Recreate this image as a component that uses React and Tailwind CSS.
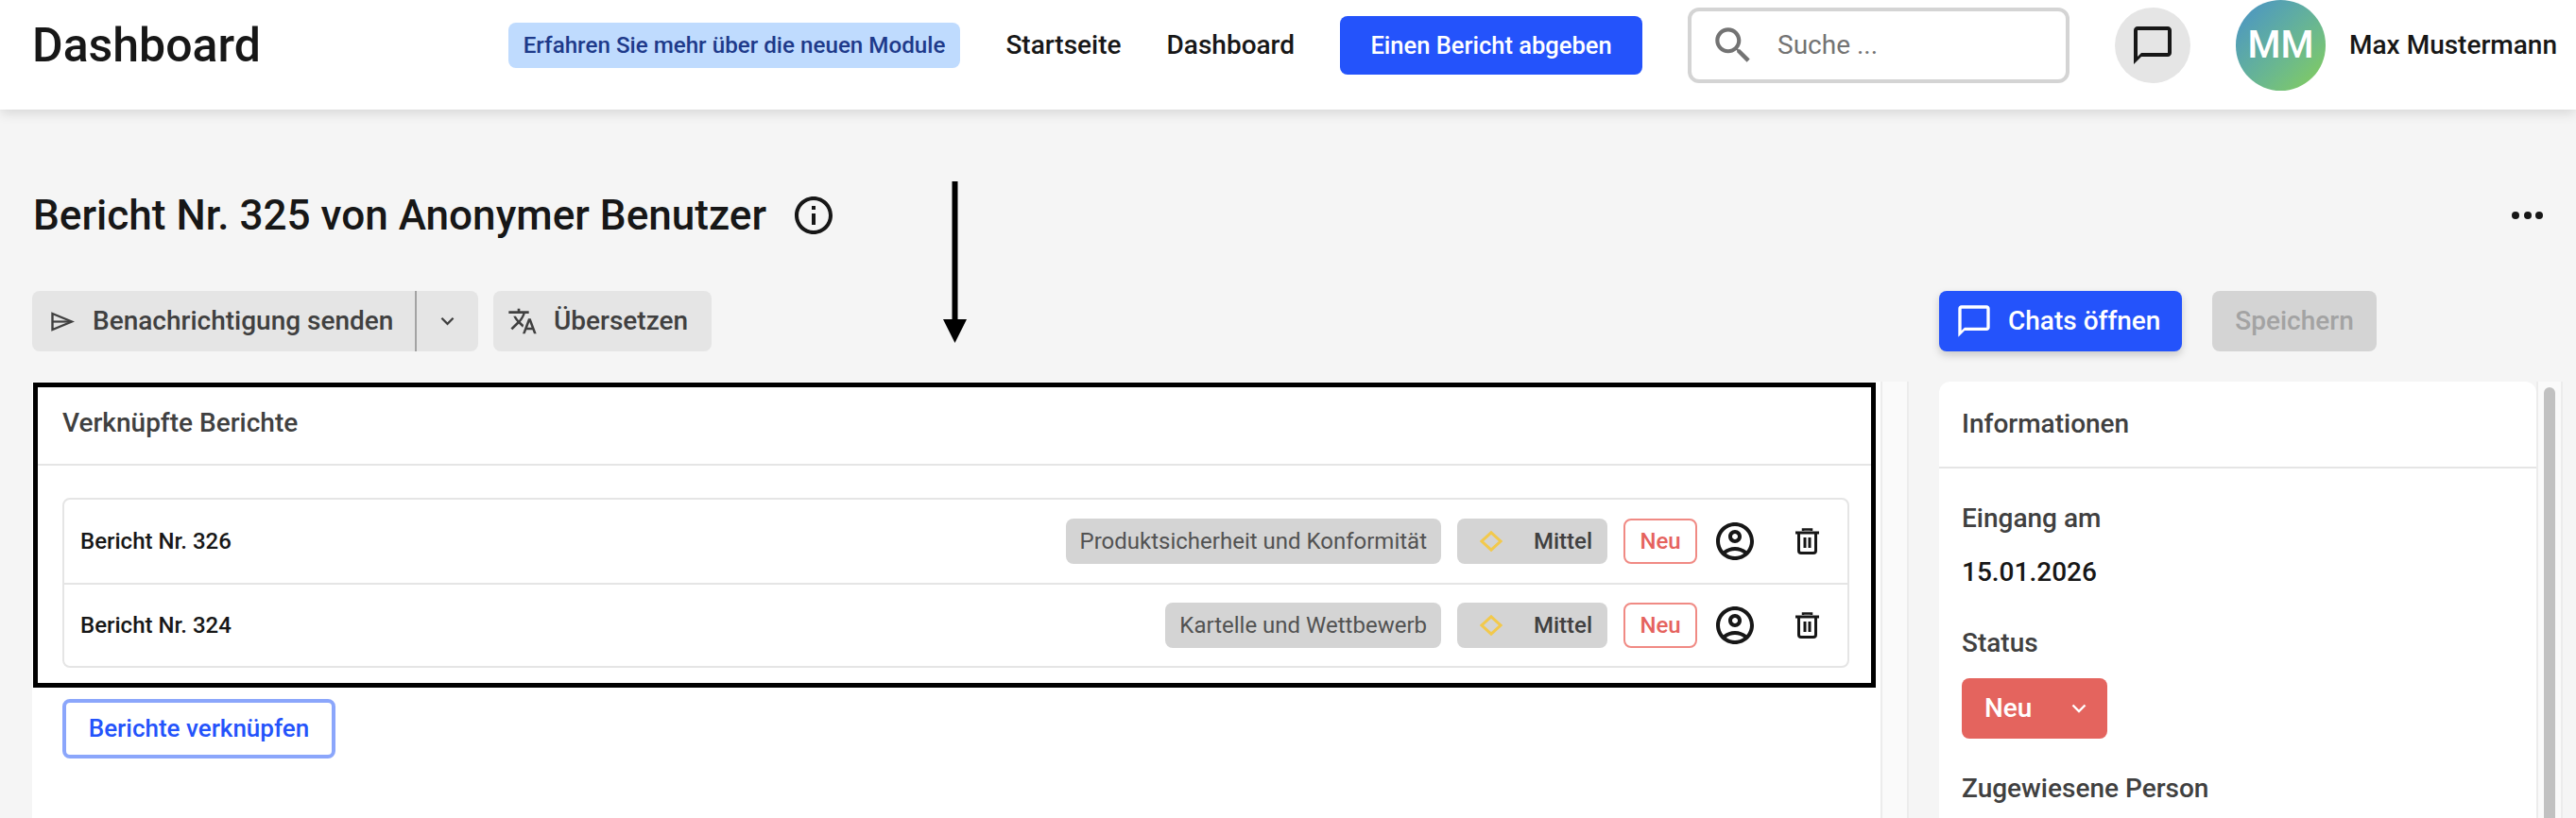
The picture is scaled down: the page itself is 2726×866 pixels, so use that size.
import React from 'react';

const Icon = ({ d, className }) => (
  <svg viewBox="0 0 24 24" fill="currentColor" className={className}>
    <path d={d} />
  </svg>
);

const paths = {
  search: 'M15.5 14h-.79l-.28-.27C15.41 12.59 16 11.11 16 9.5 16 5.91 13.09 3 9.5 3S3 5.91 3 9.5 5.91 16 9.5 16c1.61 0 3.09-.59 4.23-1.57l.27.28v.79l5 4.99L20.49 19l-4.99-5zm-6 0C7.01 14 5 11.99 5 9.5S7.01 5 9.5 5 14 7.01 14 9.5 11.99 14 9.5 14z',
  chat: 'M20 2H4c-1.1 0-2 .9-2 2v18l4-4h14c1.1 0 2-.9 2-2V4c0-1.1-.9-2-2-2zm0 14H6l-2 2V4h16v12z',
  info: 'M11 7h2v2h-2zm0 4h2v6h-2zm1-9C6.48 2 2 6.48 2 12s4.48 10 10 10 10-4.48 10-10S17.52 2 12 2zm0 18c-4.41 0-8-3.59-8-8s3.59-8 8-8 8 3.59 8 8-3.59 8-8 8z',
  translate: 'M12.87 15.07l-2.54-2.51.03-.03c1.74-1.94 2.98-4.17 3.71-6.53H17V4h-7V2H8v2H1v1.99h11.17C11.5 7.92 10.44 9.75 9 11.35 8.07 10.32 7.3 9.19 6.69 8h-2c.73 1.63 1.73 3.17 2.98 4.56l-5.09 5.02L4 19l5-5 3.11 3.11.76-2.04zM18.5 10h-2L12 22h2l1.12-3h4.75L21 22h2l-4.5-12zm-2.62 7l1.62-4.33L19.12 17h-3.24z',
  user: 'M12 2C6.48 2 2 6.48 2 12s4.48 10 10 10 10-4.48 10-10S17.52 2 12 2zM7.35 18.5C8.66 17.56 10.26 17 12 17s3.34.56 4.65 1.5C15.34 19.44 13.74 20 12 20s-3.34-.56-4.65-1.5zm10.79-1.38C16.45 15.8 14.32 15 12 15s-4.45.8-6.14 2.12C4.7 15.73 4 13.95 4 12c0-4.42 3.58-8 8-8s8 3.58 8 8c0 1.95-.7 3.73-1.86 5.12zM12 6c-1.93 0-3.5 1.57-3.5 3.5S10.07 13 12 13s3.5-1.57 3.5-3.5S13.93 6 12 6zm0 5c-.83 0-1.5-.67-1.5-1.5S11.17 8 12 8s1.5.67 1.5 1.5S12.83 11 12 11z',
};

const SendIcon = () => (
  <svg viewBox="0 0 25 21" fill="none" stroke="currentColor" strokeWidth="2.4" className="w-[25px] h-[21px] shrink-0">
    <path d="M1.5 2 22 10.5 1.5 19z" />
    <path d="M2 10.5h18" strokeWidth="2.2" />
  </svg>
);

const Chevron = ({ className }) => (
  <svg viewBox="0 0 16 10" fill="none" stroke="currentColor" strokeWidth="2.4" className={className}>
    <path d="M1.5 1.5 8 8l6.5-6.5" />
  </svg>
);

const Trash = () => (
  <svg viewBox="0 0 25 28" fill="none" stroke="#171717" strokeWidth="3" className="w-[25px] h-[28px] ml-[23px] shrink-0">
    <path d="M0 5h25" />
    <path d="M8 3V1.5h9V3" strokeWidth="2.5" />
    <path d="M3.5 5v19a2.5 2.5 0 0 0 2.5 2.5h13a2.5 2.5 0 0 0 2.5-2.5V5" />
    <path d="M10 10v11M15 10v11" />
  </svg>
);

const ReportRow = ({ name, category, className = '' }) => (
  <div className={`flex items-center h-[88px] pl-[17px] pr-[30px] ${className}`}>
    <span className="text-[#171717] text-[24px] font-medium">{name}</span>
    <div className="ml-auto flex items-center gap-[17px]">
      <span className="h-[48px] px-[15px] flex items-center rounded-lg bg-[#d4d4d4] text-[#525252] text-[24px]">{category}</span>
      <span className="h-[48px] w-[159px] pl-[24px] pr-[16px] flex items-center justify-between rounded-lg bg-[#d4d4d4] text-[#404040] text-[24px] font-medium">
        <svg viewBox="0 0 24 22" fill="none" stroke="#f2c94c" strokeWidth="3" className="w-[24px] h-[22px]">
          <path d="M12 1.8 22 11 12 20.2 2 11z" />
        </svg>
        Mittel
      </span>
      <span className="h-[48px] w-[78px] flex items-center justify-center rounded-lg border-2 border-[#f08a84] text-[#e5635e] text-[24px] font-medium">Neu</span>
      <Icon d={paths.user} className="w-12 h-12 text-[#171717] -ml-px" />
      <Trash />
    </div>
  </div>
);

export default function App() {
  return (
    <div className="relative h-[866px] overflow-hidden bg-[#f5f5f5] [font-family:Roboto,sans-serif]">
      <header className="relative z-10 h-[116px] pb-[20px] pl-[34px] pr-[20px] flex items-center justify-between bg-white shadow-[0_4px_12px_rgba(0,0,0,0.12)]">
        <h1 className="text-[50px] font-medium text-[#171717]">Dashboard</h1>
        <div className="flex items-center gap-[48px]">
          <span className="h-[48px] px-[16px] flex items-center rounded-lg bg-[#bfdbfe] text-[#1e3a8a] text-[24.2px] font-medium">Erfahren Sie mehr über die neuen Module</span>
          <a className="text-[28px] font-medium text-[#171717]">Startseite</a>
          <a className="text-[28px] font-medium text-[#171717]">Dashboard</a>
          <button className="h-[62px] w-[320px] rounded-lg bg-[#2453fb] text-white text-[25.5px] font-medium">Einen Bericht abgeben</button>
          <div className="h-[80px] w-[404px] flex items-center pl-[19px] rounded-xl border-4 border-[#d4d4d4] bg-white">
            <Icon d={paths.search} className="w-[50px] h-[50px] text-[#737373] shrink-0" />
            <span className="ml-[22px] text-[28px] text-[#737373]">Suche ...</span>
          </div>
          <button className="w-[80px] h-[80px] flex items-center justify-center rounded-full bg-[#e5e5e5]">
            <Icon d={paths.chat} className="w-12 h-12 text-[#171717]" />
          </button>
          <div className="flex items-center gap-[25px]">
            <div className="w-[95px] h-[96px] flex items-center justify-center rounded-full bg-linear-to-br from-[#4a90c8] to-[#86cf4f] text-white text-[40px] font-medium">MM</div>
            <span className="text-[28px] font-medium text-[#171717]">Max Mustermann</span>
          </div>
        </div>
      </header>

      <div className="flex items-center justify-between mt-[92px] pl-[35px] pr-[35px] h-[40px]">
        <div className="flex items-center gap-[26px]">
          <h2 className="text-[44.1px] font-medium text-[#171717]">Bericht Nr. 325 von Anonymer Benutzer</h2>
          <Icon d={paths.info} className="w-12 h-12 text-[#171717]" />
        </div>
        <div className="flex gap-[4.5px]">
          <span className="w-2 h-2 rounded-full bg-[#171717]" />
          <span className="w-2 h-2 rounded-full bg-[#171717]" />
          <span className="w-2 h-2 rounded-full bg-[#171717]" />
        </div>
      </div>

      <div className="grid grid-cols-[1986px_660px] grid-rows-[64px_462px] gap-x-[32px] gap-y-[32px] mt-[60px] pl-[34px]">
        <div className="flex gap-[16px]">
          <div className="flex h-[64px] w-[472px] rounded-lg bg-[#e5e5e5] text-[#404040]">
            <button className="flex items-center w-[407px] pl-[20px] border-r-2 border-[#a3a3a3]">
              <SendIcon />
              <span className="ml-[19px] text-[28px] font-medium">Benachrichtigung senden</span>
            </button>
            <button className="flex-1 flex items-center justify-center">
              <Chevron className="w-[15px] h-[10px]" />
            </button>
          </div>
          <button className="flex items-center h-[64px] w-[231px] pl-[15px] rounded-lg bg-[#e5e5e5] text-[#404040]">
            <Icon d={paths.translate} className="w-[32px] h-[32px] shrink-0" />
            <span className="ml-[17px] text-[28px] font-medium">Übersetzen</span>
          </button>
        </div>
        <div className="flex gap-[32px]">
          <button className="flex items-center h-[64px] w-[257px] pl-[17px] rounded-lg bg-[#2453fb] text-white shadow-[0_4px_8px_rgba(0,0,0,0.18)]">
            <Icon d={paths.chat} className="w-[40px] h-[40px] shrink-0" />
            <span className="ml-[16px] text-[28px] font-medium">Chats öffnen</span>
          </button>
          <button className="h-[64px] w-[174px] rounded-lg bg-[#d4d4d4] text-[#a3a3a3] text-[28px] font-medium">Speichern</button>
        </div>

        <div className="flex">
          <section className="w-[1956px] bg-white pl-px pt-px">
            <div className="w-[1950px] border-[5px] border-black">
              <div className="h-[83px] pb-[6px] flex items-center pl-[26px] border-b-2 border-[#e5e5e5] text-[28px] font-medium text-[#404040]">Verknüpfte Berichte</div>
              <div className="pt-[34px] pb-[16px] pl-[26px] pr-[23px]">
                <div className="rounded-lg border-2 border-[#e5e5e5]">
                  <ReportRow name="Bericht Nr. 326" category="Produktsicherheit und Konformität" />
                  <ReportRow name="Bericht Nr. 324" category="Kartelle und Wettbewerb" className="border-t-2 border-[#e5e5e5]" />
                </div>
              </div>
            </div>
            <button className="mt-[12px] ml-[31px] h-[63px] w-[289px] rounded-lg border-4 border-[#8ba6fb] bg-white text-[#2453fb] text-[26px] font-medium">Berichte verknüpfen</button>
          </section>
          <div className="w-[30px] bg-[#fafafa] border-x-2 border-[#ececec]" />
        </div>

        <div className="flex">
          <aside className="w-[632px] rounded-t-xl bg-white">
            <div className="h-[92px] flex items-center pl-[24px] border-b-2 border-[#e5e5e5] text-[28px] font-medium text-[#404040]">Informationen</div>
            <div className="pt-[35px] px-[24px] text-[28px] font-medium text-[#404040]">
              <p className="leading-[36px]">Eingang am</p>
              <p className="mt-[21px] leading-[36px] text-[#171717]">15.01.2026</p>
              <p className="mt-[39px] leading-[36px]">Status</p>
              <button className="mt-[19px] h-[64px] w-[154px] pl-[24px] pr-[22px] flex items-center justify-between rounded-lg bg-[#e4645e] text-white">
                Neu
                <Chevron className="w-[16px] h-[10px]" />
              </button>
              <p className="mt-[35px] leading-[36px]">Zugewiesene Person</p>
            </div>
          </aside>
          <div className="relative w-[28px] bg-[#fafafa] border-x-2 border-[#ececec]">
            <div className="h-full mt-[6px] mx-[6px] rounded-full bg-[#c1c1c1]" />
          </div>
        </div>
      </div>

      <svg viewBox="0 0 25 171" className="absolute z-20 left-[998px] top-[192px] w-[25px] h-[171px]">
        <path d="M9.5 0h6v146h9.5L12.5 171 0 146h9.5z" fill="#000" />
      </svg>
    </div>
  );
}
